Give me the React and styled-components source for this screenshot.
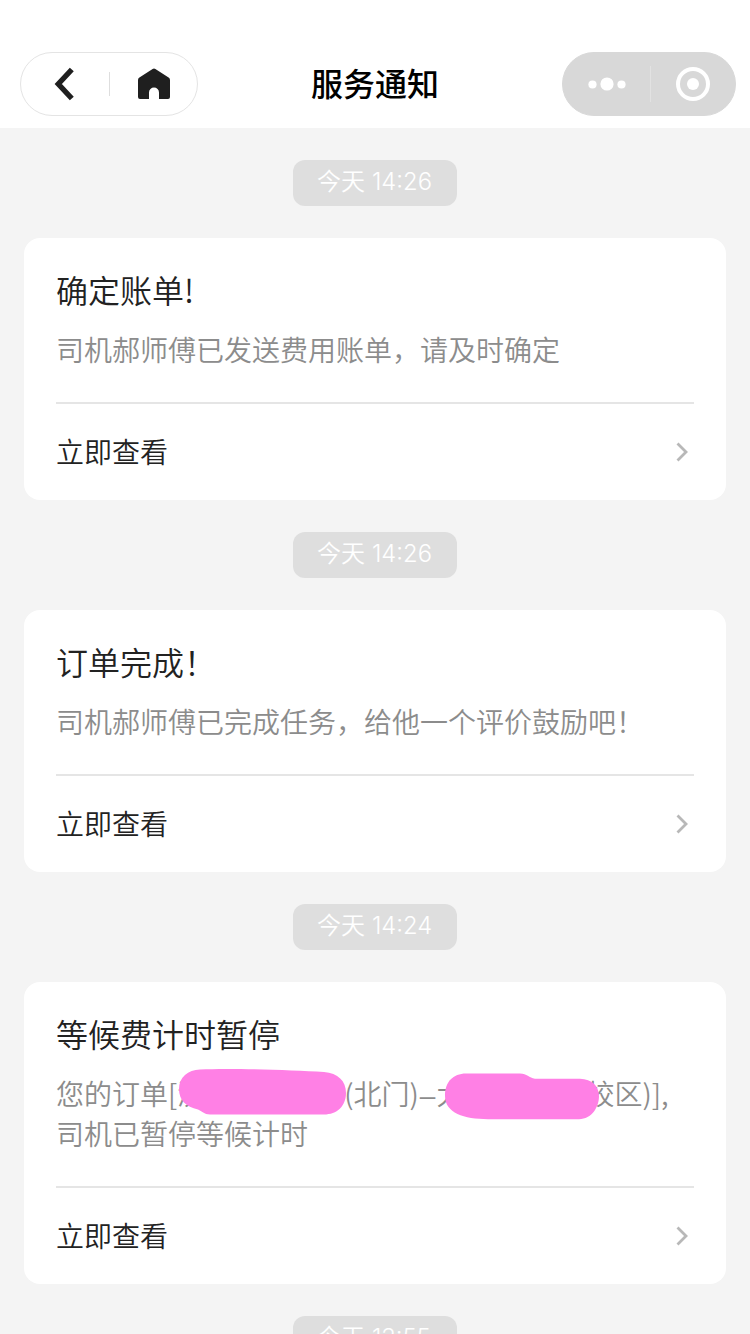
import React from 'react';
import styled, { createGlobalStyle } from 'styled-components';

const GlobalStyle = createGlobalStyle`
  * {
    box-sizing: border-box;
  }

  body {
    margin: 0;
    background-color: #f4f4f4;
    font-family: 'Noto Sans CJK SC', sans-serif;
  }
`;

const Page = styled.div`
  height: 1334px;
  overflow: hidden;
  background-color: #f4f4f4;
`;

const Header = styled.header`
  display: grid;
  grid-template-columns: 178px 1fr 174px;
  align-items: center;
  height: 128px;
  padding: 40px 14px 0 20px;
  background-color: #ffffff;
`;

const HeaderTitle = styled.h1`
  margin: 0;
  padding: 0 10px 4px 0;
  color: #000000;
  font-size: 32px;
  font-weight: 500;
  line-height: 48px;
  text-align: center;
`;

const Capsule = styled.div`
  display: flex;
  align-items: center;
  height: 64px;
  border: 1px solid ${({ $filled }) => ($filled ? '#d8d8d8' : '#e4e4e4')};
  border-radius: 32px;
  background-color: ${({ $filled }) => ($filled ? '#d8d8d8' : '#ffffff')};
`;

const CapsuleButton = styled.button`
  display: flex;
  flex: 1;
  align-items: center;
  justify-content: center;
  height: 100%;
  padding: 0;
  border: none;
  background: none;
`;

const CapsuleDivider = styled.span`
  width: 1px;
  height: ${({ $tall }) => ($tall ? '36px' : '24px')};
  margin-left: ${({ $tall }) => ($tall ? '2px' : '0')};
  background-color: ${({ $tall }) => ($tall ? '#e2e2e2' : '#dedede')};
`;

const List = styled.main`
  display: flex;
  flex-direction: column;
  align-items: center;
  gap: 32px;
  padding: 32px 24px;
`;

const TimeChip = styled.time`
  display: flex;
  flex-shrink: 0;
  gap: 7px;
  width: 164px;
  height: 46px;
  padding-left: 24px;
  border-radius: 12px;
  background-color: #dedede;
  color: #ffffff;
  font-size: 24px;
  font-weight: 350;
  line-height: 40px;
`;

const Clock = styled.span`
  font-family: Inter, 'Liberation Sans', sans-serif;
  font-size: 23.8px;
  font-weight: 300;
  line-height: 44px;
`;

const Card = styled.article`
  flex-shrink: 0;
  width: 100%;
  padding: 0 32px;
  border-radius: 16px;
  background-color: #ffffff;
`;

const CardBody = styled.div`
  padding: 29px 0 33px;
  border-bottom: 2px solid #e5e5e5;
`;

const CardTitle = styled.h2`
  margin: 0;
  color: #222222;
  font-size: 32px;
  font-weight: 350;
  line-height: 44px;
`;

const CardText = styled.p`
  position: relative;
  margin: 18px 0 0;
  color: #8c8c8c;
  font-size: 28px;
  font-weight: 350;
  line-height: 40px;
  white-space: nowrap;
`;

const CardLink = styled.a`
  display: flex;
  align-items: center;
  justify-content: space-between;
  height: 96px;
  color: #222222;
  font-size: 28px;
  font-weight: 350;
  line-height: 40px;
`;

const LinkLabel = styled.span`
  padding-bottom: 2px;
`;

const Hidden = styled.span`
  display: inline-block;
  width: ${({ $width }) => $width}px;
`;

const Dash = styled.span`
  margin: 0 1px;
  font-family: 'Liberation Sans', sans-serif;
  line-height: 1;
`;

const Marker = styled.svg`
  position: absolute;
  top: -9px;
  left: 120px;
`;

const BackIcon = () => (
  <svg width="24" height="36" viewBox="0 0 24 36" fill="none">
    <path d="M18.800 3.500 L5.300 18 L18.800 32.500" stroke="#1f1f1f" strokeWidth="5.4" />
  </svg>
);

const HomeIcon = () => (
  <svg width="34" height="32" viewBox="-2 0 34 32">
    <path
      d="M14.6 0.9 Q16 0 17.4 0.9 L30.6 9.4 Q32 10.3 32 12 V29 Q32 31 30 31 H21 V24.500 A5 5 0 0 0 11 24.500 V31 H2 Q0 31 0 29 V12 Q0 10.3 1.4 9.4 Z"
      fill="#1f1f1f"
    />
  </svg>
);

const MoreIcon = () => (
  <svg width="42" height="14" viewBox="-4 0 42 14" fill="#ffffff">
    <circle cx="4.5" cy="7.5" r="4.1" />
    <circle cx="19" cy="7" r="6.6" />
    <circle cx="33.5" cy="7.5" r="4.1" />
  </svg>
);

const CloseIcon = () => (
  <svg width="36" height="34" viewBox="-1 0 36 34">
    <circle cx="17" cy="17" r="15" fill="none" stroke="#ffffff" strokeWidth="4" />
    <circle cx="17" cy="17" r="6" fill="#ffffff" />
  </svg>
);

const ArrowIcon = () => (
  <svg width="24" height="24" viewBox="0 0 24 24" fill="none">
    <path d="M7.500 3.500 L16 12 L7.500 20.500" stroke="#b8b8b8" strokeWidth="2.8" />
  </svg>
);

// Pink strokes that cover the pick-up and drop-off addresses
const AddressMarker = () => (
  <Marker width="430" height="56" viewBox="176 1064 430 56" fill="#ff80e5">
    <path d="M200 1069.5 C230 1068 290 1070 324 1072 C338 1073 346 1081 346 1093 C346 1106 337 1114.500 324 1114.500 L210 1114.500 C204 1114.500 202 1111 198 1109.500 C186 1107 179 1100 179 1089 C179 1077 188 1070 200 1069.500 Z" />
    <path d="M466 1073.500 L520 1073.500 C527 1073.500 529 1078 535 1078.700 L580 1078.700 C592 1079 599 1086 599 1096 C599 1107 592 1119 579 1119.200 L488 1119.200 C464 1119 445 1113 445 1096 C445 1082 453 1073.500 466 1073.500 Z" />
  </Marker>
);

const notices = [
  {
    time: '14:26',
    title: '确定账单!',
    text: '司机郝师傅已发送费用账单\uff0c请及时确定',
  },
  {
    time: '14:26',
    title: '订单完成\uff01',
    text: '司机郝师傅已完成任务\uff0c给他一个评价鼓励吧\uff01',
  },
  {
    time: '14:24',
    title: '等候费计时暂停',
    text: (
      <>
        您的订单[滨
        <Hidden $width={139} />
        (北门)
        <Dash>–</Dash>大
        <Hidden $width={122} />
        校区)],
        <br />
        司机已暂停等候计时
        <AddressMarker />
      </>
    ),
  },
];

const TimeLabel = ({ time }) => (
  <TimeChip>
    今天<Clock>{time}</Clock>
  </TimeChip>
);

const Notice = ({ time, title, text }) => (
  <>
    <TimeLabel time={time} />
    <Card>
      <CardBody>
        <CardTitle>{title}</CardTitle>
        <CardText>{text}</CardText>
      </CardBody>
      <CardLink>
        <LinkLabel>立即查看</LinkLabel>
        <ArrowIcon />
      </CardLink>
    </Card>
  </>
);

const App = () => {
  return (
    <Page>
      <GlobalStyle />
      <Header>
        <Capsule>
          <CapsuleButton aria-label="返回">
            <BackIcon />
          </CapsuleButton>
          <CapsuleDivider />
          <CapsuleButton aria-label="首页">
            <HomeIcon />
          </CapsuleButton>
        </Capsule>
        <HeaderTitle>服务通知</HeaderTitle>
        <Capsule $filled>
          <CapsuleButton aria-label="更多">
            <MoreIcon />
          </CapsuleButton>
          <CapsuleDivider $tall />
          <CapsuleButton aria-label="关闭">
            <CloseIcon />
          </CapsuleButton>
        </Capsule>
      </Header>
      <List>
        {notices.map((notice, index) => (
          <Notice key={index} {...notice} />
        ))}
        <TimeLabel time="13:55" />
      </List>
    </Page>
  );
};

export default App;
